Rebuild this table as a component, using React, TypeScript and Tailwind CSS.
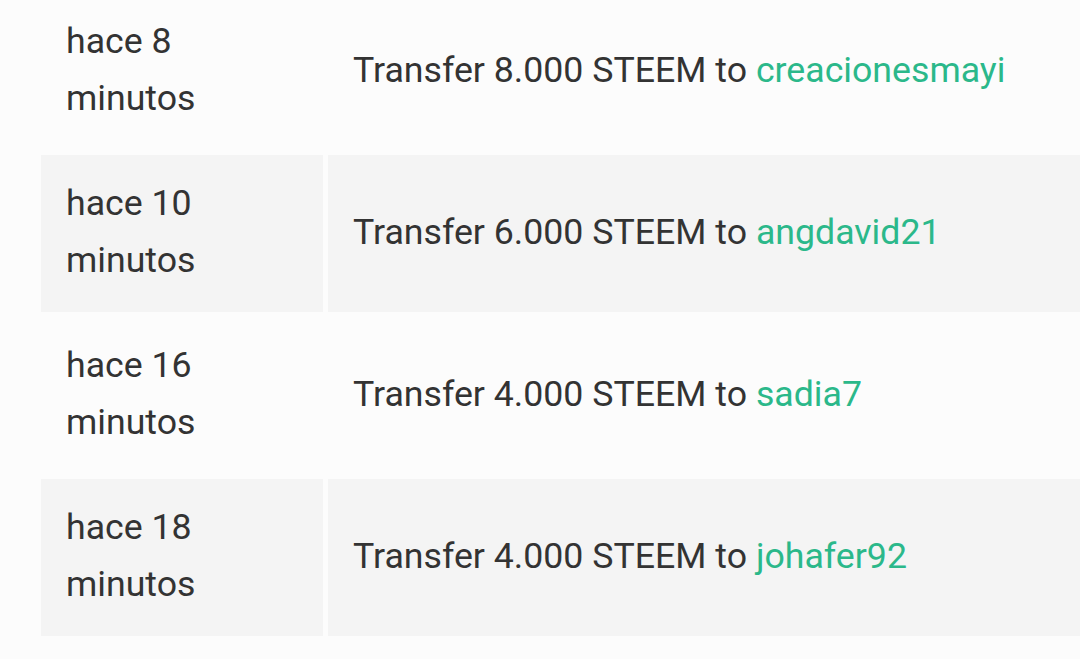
const rows = [
  { n: "8", amount: "8.000", to: "creacionesmayi" },
  { n: "10", amount: "6.000", to: "angdavid21" },
  { n: "16", amount: "4.000", to: "sadia7" },
  { n: "18", amount: "4.000", to: "johafer92" },
];

export default function App() {
  return (
    <div
      className="h-[659px] w-[1080px] overflow-hidden bg-[#fcfcfc] text-[#333333]"
      style={{ fontFamily: "Roboto, 'Noto Sans', sans-serif" }}
    >
      <div className="-mt-[7px] flex flex-col gap-[5px] pl-[41px]">
        {rows.map((r, i) => (
          <div key={i} className="flex h-[157px] gap-[5px]">
            <div
              className={`flex w-[282px] shrink-0 items-center px-[25px] pb-[4px] text-[35.7px] leading-[57px] ${
                i % 2 === 1 ? "bg-[#f4f4f4]" : ""
              }`}
            >
              <div>
                hace {r.n}
                <br />
                minutos
              </div>
            </div>
            <div
              className={`flex flex-1 items-center px-[25px] pb-[2px] text-[35.7px] ${
                i % 2 === 1 ? "bg-[#f4f4f4]" : ""
              }`}
            >
              <span className="whitespace-nowrap">
                Transfer {r.amount} STEEM to{" "}
                <a className="text-[#2bb88a]">{r.to}</a>
              </span>
            </div>
          </div>
        ))}
      </div>
    </div>
  );
}
